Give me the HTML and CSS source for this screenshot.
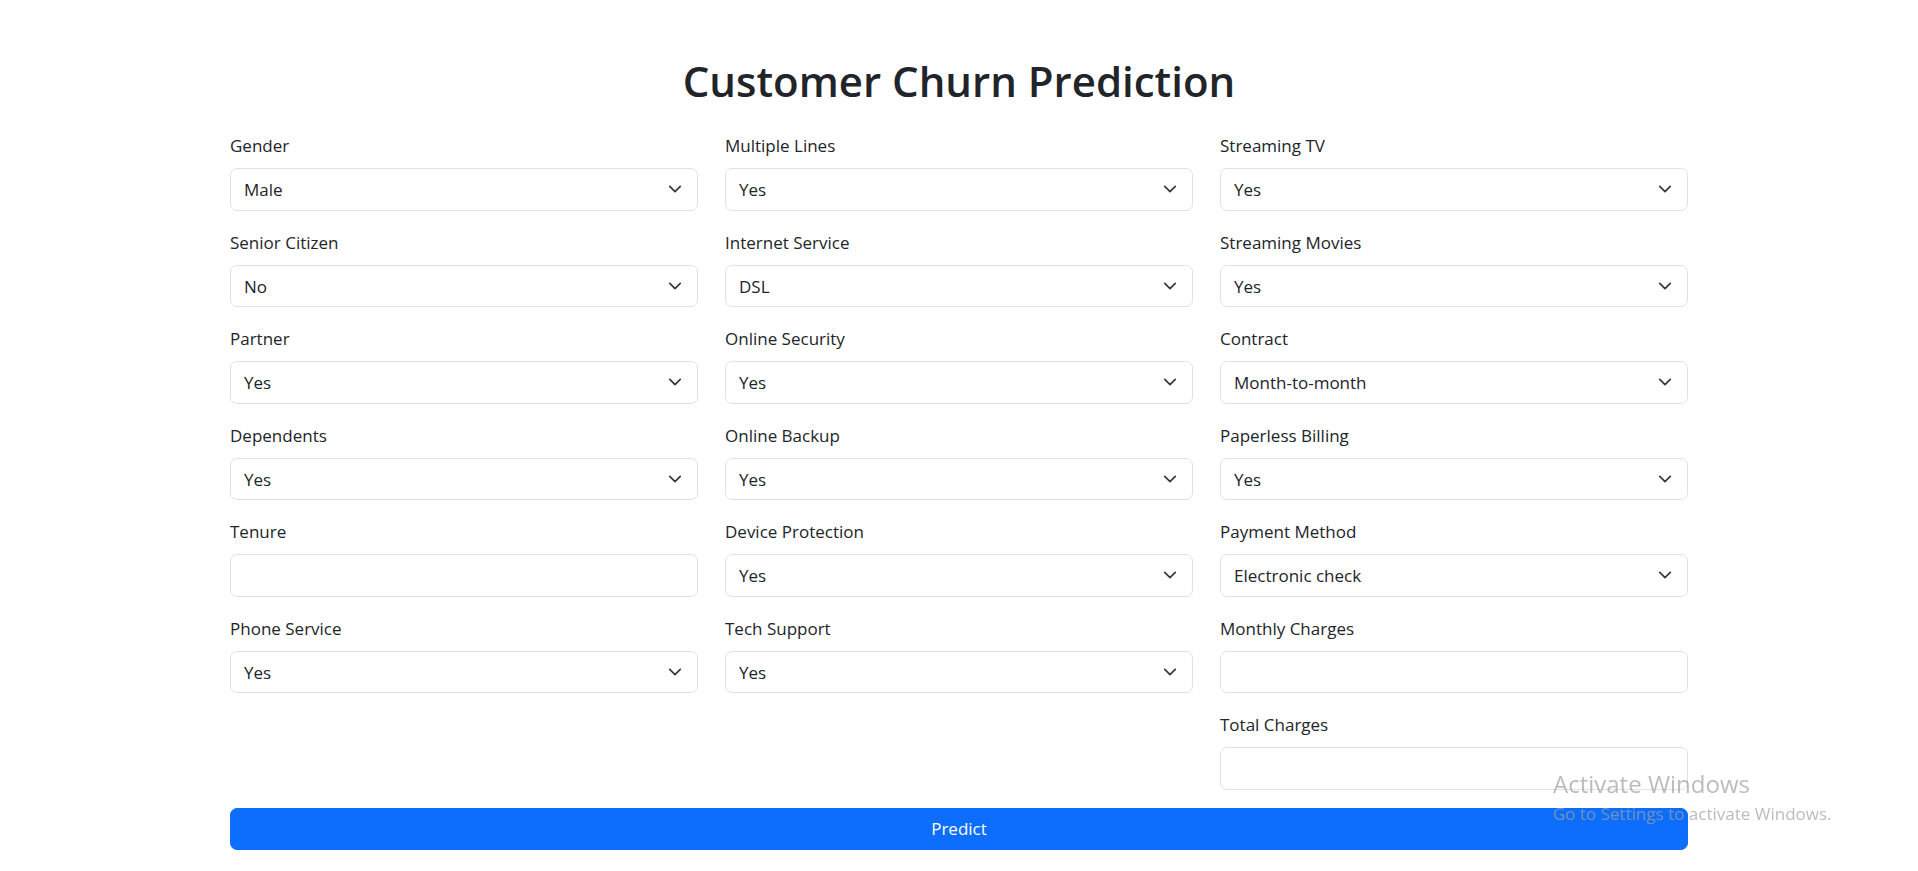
FILE: index.html
```html
<!DOCTYPE html>
<html lang="en">
<head>
<meta charset="utf-8">
<meta name="viewport" content="width=device-width, initial-scale=1">
<title>Customer Churn Prediction</title>
<link rel="stylesheet" href="styles.css">
</head>
<body>
<main class="container">
  <h1 class="title">Customer Churn Prediction</h1>
  <form class="form">
    <div class="columns">
      <div class="column">
        <div class="field"><label class="label" for="gender">Gender</label><select class="control select" id="gender"><option>Male</option><option>Female</option></select></div>
        <div class="field"><label class="label" for="senior">Senior Citizen</label><select class="control select" id="senior"><option>No</option><option>Yes</option></select></div>
        <div class="field"><label class="label" for="partner">Partner</label><select class="control select" id="partner"><option>Yes</option><option>No</option></select></div>
        <div class="field"><label class="label" for="dependents">Dependents</label><select class="control select" id="dependents"><option>Yes</option><option>No</option></select></div>
        <div class="field"><label class="label" for="tenure">Tenure</label><input class="control" id="tenure" type="text"></div>
        <div class="field"><label class="label" for="phone">Phone Service</label><select class="control select" id="phone"><option>Yes</option><option>No</option></select></div>
      </div>
      <div class="column">
        <div class="field"><label class="label" for="lines">Multiple Lines</label><select class="control select" id="lines"><option>Yes</option><option>No</option></select></div>
        <div class="field"><label class="label" for="internet">Internet Service</label><select class="control select" id="internet"><option>DSL</option><option>Fiber optic</option><option>No</option></select></div>
        <div class="field"><label class="label" for="security">Online Security</label><select class="control select" id="security"><option>Yes</option><option>No</option></select></div>
        <div class="field"><label class="label" for="backup">Online Backup</label><select class="control select" id="backup"><option>Yes</option><option>No</option></select></div>
        <div class="field"><label class="label" for="device">Device Protection</label><select class="control select" id="device"><option>Yes</option><option>No</option></select></div>
        <div class="field"><label class="label" for="support">Tech Support</label><select class="control select" id="support"><option>Yes</option><option>No</option></select></div>
      </div>
      <div class="column">
        <div class="field"><label class="label" for="tv">Streaming TV</label><select class="control select" id="tv"><option>Yes</option><option>No</option></select></div>
        <div class="field"><label class="label" for="movies">Streaming Movies</label><select class="control select" id="movies"><option>Yes</option><option>No</option></select></div>
        <div class="field"><label class="label" for="contract">Contract</label><select class="control select" id="contract"><option>Month-to-month</option><option>One year</option><option>Two year</option></select></div>
        <div class="field"><label class="label" for="paperless">Paperless Billing</label><select class="control select" id="paperless"><option>Yes</option><option>No</option></select></div>
        <div class="field"><label class="label" for="payment">Payment Method</label><select class="control select" id="payment"><option>Electronic check</option><option>Mailed check</option></select></div>
        <div class="field"><label class="label" for="monthly">Monthly Charges</label><input class="control" id="monthly" type="text"></div>
        <div class="field"><label class="label" for="total">Total Charges</label><input class="control" id="total" type="text"></div>
      </div>
    </div>
    <button class="submit" type="submit">Predict</button>
  </form>
</main>
<aside class="watermark">
  <p class="watermark-title">Activate Windows</p>
  <p class="watermark-text">Go to Settings to activate Windows.</p>
</aside>
</body>
</html>
```
FILE: styles.css
```css
*,
*::before,
*::after {
  box-sizing: border-box;
}

body {
  margin: 0;
  background: #fff;
  color: #212529;
  font-family: "Segoe UI", "Open Sans", "Noto Sans", sans-serif;
  font-size: 17px;
  line-height: 1.5;
}

.container {
  max-width: 1486px;
  margin: 0 auto;
  padding: 54px 14px 20px;
}

.title {
  margin: 0 0 24px;
  font-size: 42px;
  font-weight: 600;
  line-height: 54px;
  text-align: center;
}

.form {
  display: flex;
  flex-direction: column;
  gap: 18px;
}

.columns {
  display: grid;
  grid-template-columns: repeat(auto-fit, minmax(280px, 1fr));
  gap: 27px;
  align-items: start;
}

.column {
  display: flex;
  flex-direction: column;
  gap: 18px;
}

.field {
  display: flex;
  flex-direction: column;
  gap: 9px;
}

.label {
  line-height: 27px;
}

.control {
  width: 100%;
  margin: 0;
  padding: 8px 13px 7px;
  border: 1px solid #dee2e6;
  border-radius: 7px;
  background-color: #fff;
  color: inherit;
  font: inherit;
}

.select {
  appearance: none;
  padding-right: 40px;
  background-image: url("data:image/svg+xml,%3Csvg xmlns='http://www.w3.org/2000/svg' viewBox='0 0 16 16'%3E%3Cpath fill='none' stroke='%23343a40' stroke-linecap='round' stroke-linejoin='round' stroke-width='2' d='m2 5 6 6 6-6'/%3E%3C/svg%3E");
  background-repeat: no-repeat;
  background-position: right 13px center;
  background-size: 18px 14px;
}

.submit {
  width: 100%;
  padding: 7px 13px 8px;
  border: 1px solid #0d6efd;
  border-radius: 7px;
  background: #0d6efd;
  color: #fff;
  font: inherit;
  cursor: pointer;
}

.watermark {
  position: fixed;
  right: 81px;
  bottom: 44px;
  width: 284px;
  color: rgba(160, 160, 160, 0.7);
  white-space: nowrap;
  pointer-events: none;
}

.watermark p {
  margin: 0;
}

.watermark-title {
  font-size: 24px;
  line-height: 34px;
}

.watermark-text {
  font-size: 17px;
  line-height: 26px;
}
```
